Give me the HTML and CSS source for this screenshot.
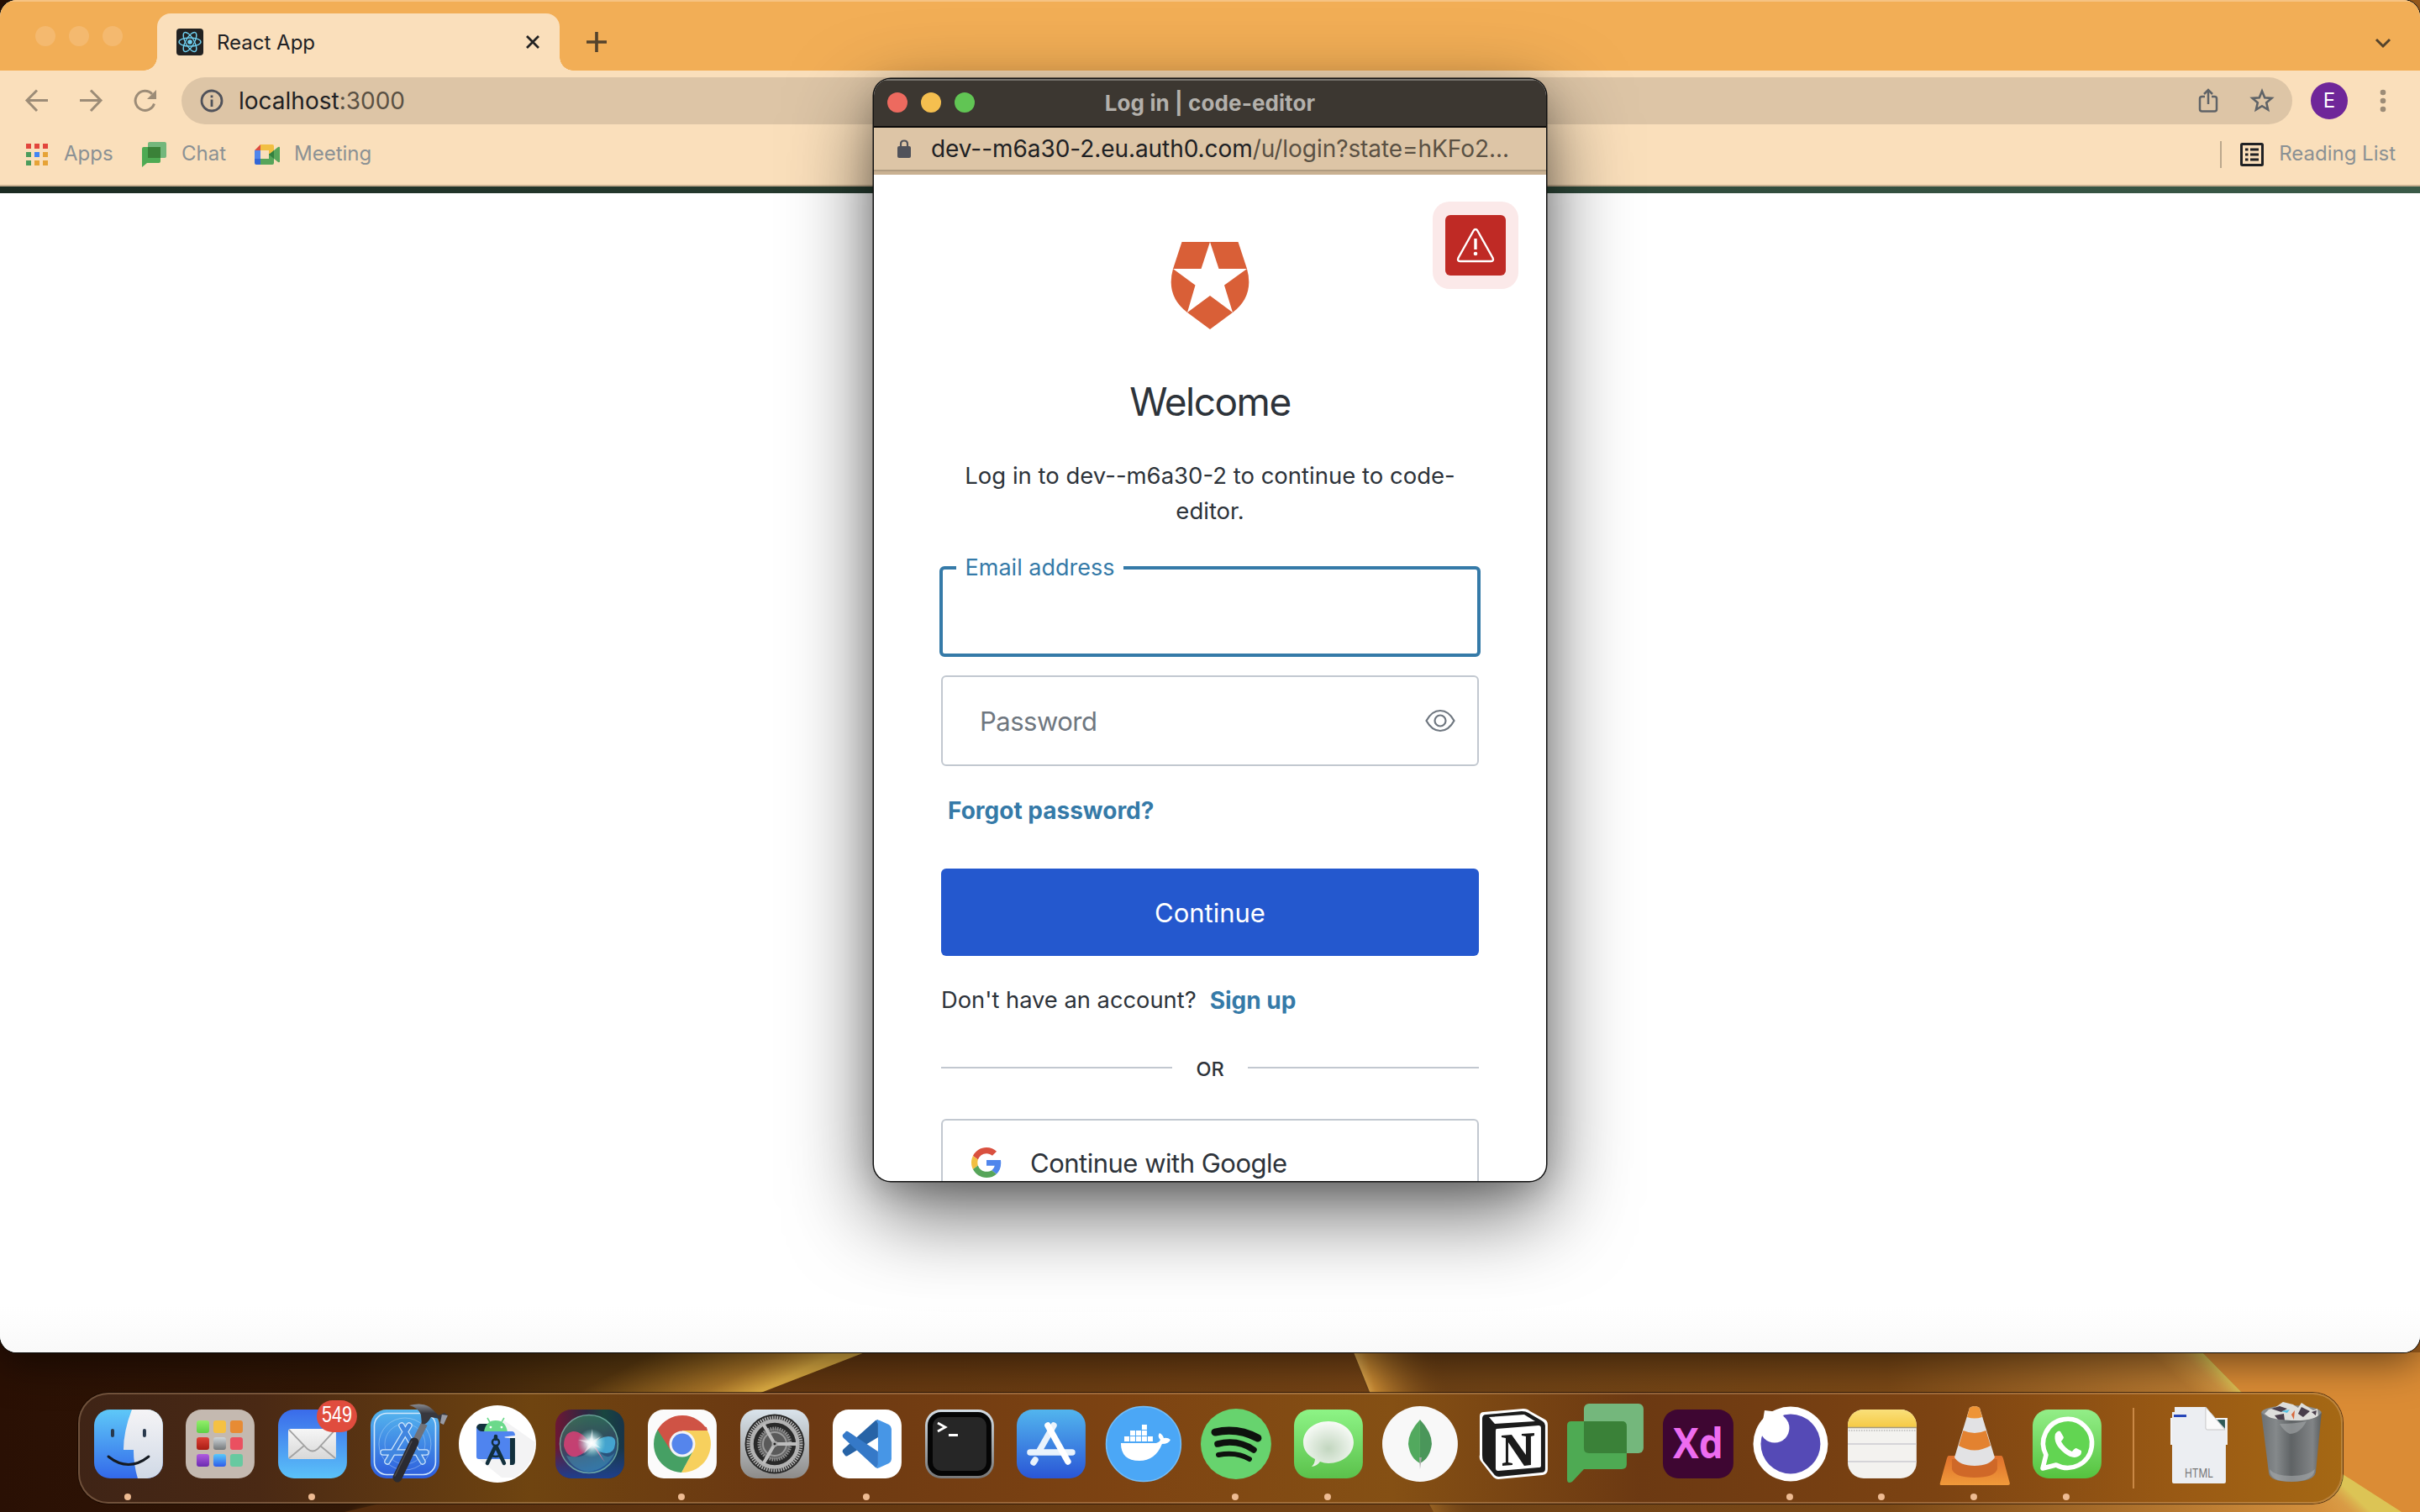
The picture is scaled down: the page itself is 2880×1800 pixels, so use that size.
FILE: index.html
```html
<!DOCTYPE html>
<html lang="en">
<head>
<meta charset="utf-8">
<title>React App</title>
<link rel="stylesheet" href="styles.css">
</head>
<body>
<div class="desktop">
  <svg class="wallpaper" viewBox="0 0 2880 190" preserveAspectRatio="none">
    <defs>
      <linearGradient id="wp-left" x1="0" x2="1"><stop offset="0" stop-color="#2a1004"/><stop offset=".4" stop-color="#321806"/><stop offset="1" stop-color="#7a5418"/></linearGradient>
      <linearGradient id="wp-glow1" gradientUnits="userSpaceOnUse" x1="700" y1="40" x2="745" y2="128"><stop offset="0" stop-color="#d09030" stop-opacity="0"/><stop offset=".7" stop-color="#d39435" stop-opacity=".6"/><stop offset="1" stop-color="#dbab42"/></linearGradient>
      <linearGradient id="wp-mid" x1="0" x2="1"><stop offset="0" stop-color="#4a250b"/><stop offset=".45" stop-color="#6b3d12"/><stop offset="1" stop-color="#95591f"/></linearGradient>
      <linearGradient id="wp-glow2" gradientUnits="userSpaceOnUse" x1="1620" y1="40" x2="1720" y2="14"><stop offset="0" stop-color="#e9b457"/><stop offset=".15" stop-color="#c48631"/><stop offset="1" stop-color="#6b3d12" stop-opacity="0"/></linearGradient>
      <linearGradient id="wp-right" x1="0" x2="1"><stop offset="0" stop-color="#6b4015"/><stop offset=".5" stop-color="#7a4816"/><stop offset="1" stop-color="#e8a045"/></linearGradient>
      <linearGradient id="wp-glow3" gradientUnits="userSpaceOnUse" x1="2700" y1="76" x2="2672" y2="106"><stop offset="0" stop-color="#dcc455"/><stop offset=".4" stop-color="#d9a04a" stop-opacity=".6"/><stop offset="1" stop-color="#d99a40" stop-opacity="0"/></linearGradient>
    </defs>
    <rect width="2880" height="190" fill="url(#wp-mid)"/>
    <path d="M0 0H1029L908 47Q690 125 410 190H0z" fill="url(#wp-left)"/>
    <path d="M500 0H1029L908 47Q690 125 410 190H200z" fill="url(#wp-glow1)"/>
    <path d="M1611 0H2880V190H1706Q1650 120 1611 0z" fill="url(#wp-right)"/>
    <path d="M1611 0H1800V190H1706L1630 47z" fill="url(#wp-glow2)"/>
    <path d="M2621 0H2880V190H2858L2788 145 2667 47z" fill="#db8c35"/>
    <path d="M2500 0H2621L2667 47 2788 145 2858 190H2640z" fill="url(#wp-glow3)"/>
  </svg>

  <main class="browser">
    <div class="tabstrip">
      <div class="lights lights-idle"><i></i><i></i><i></i></div>
      <div class="tab">
        <svg class="favicon" viewBox="0 0 32 32"><rect width="32" height="32" rx="4" fill="#222"/><g fill="none" stroke="#6fd0f0" stroke-width="1.4"><ellipse cx="16" cy="16" rx="13" ry="5"/><ellipse cx="16" cy="16" rx="13" ry="5" transform="rotate(60 16 16)"/><ellipse cx="16" cy="16" rx="13" ry="5" transform="rotate(120 16 16)"/></g><circle cx="16" cy="16" r="2.8" fill="#6fd0f0"/></svg>
        <span class="tab-title">React App</span>
        <svg class="tab-close" viewBox="0 0 18 18"><path d="M2 2L16 16M16 2L2 16" stroke="#222" stroke-width="2.8" fill="none"/></svg>
      </div>
      <svg class="new-tab" viewBox="0 0 24 24"><path d="M12 0V24M0 12H24" stroke="#54432c" stroke-width="3.6"/></svg>
      <svg class="tab-menu" viewBox="0 0 20 14"><path d="M2 3L10 11 18 3" stroke="#54432c" stroke-width="3" fill="none"/></svg>
    </div>
    <div class="toolbar">
      <svg class="nav-icon" viewBox="0 0 32 32"><path d="M29 15.500H4M16 3.500L4 15.500 16 28" stroke="#9c8c77" stroke-width="3" fill="none"/></svg>
      <svg class="nav-icon" viewBox="0 0 32 32"><path d="M3 15.500H28M16 3.500L28 15.500 16 28" stroke="#9c8c77" stroke-width="3" fill="none"/></svg>
      <svg class="nav-icon" viewBox="0 0 32 32"><path d="M27.500 19.500A11.500 11.500 0 1 1 25 8" stroke="#9c8c77" stroke-width="3" fill="none"/><path d="M30 3V14H19z" fill="#9c8c77"/></svg>
      <div class="omnibox">
        <svg class="info" viewBox="0 0 28 28"><circle cx="14" cy="14" r="12" fill="none" stroke="#50525a" stroke-width="2.8"/><path d="M14 12.500V21M14 7.500V10.300" stroke="#50525a" stroke-width="2.8"/></svg>
        <span class="address">localhost<span class="dim">:3000</span></span>
        <svg class="share" viewBox="0 0 24 30"><path d="M8 10H4.500Q2 10 2 12.500V25Q2 27.500 4.500 27.500H19.500Q22 27.500 22 25V12.500Q22 10 19.500 10H16M12 19V3M7 7L12 2 17 7" stroke="#5f6367" stroke-width="2.500" fill="none"/></svg>
        <svg class="star" viewBox="0 0 30 30"><path d="M15 3.500L18.200 11.200 26.500 11.900 20.200 17.300 22.100 25.500 15 21.200 7.900 25.500 9.800 17.300 3.500 11.900 11.800 11.200z" stroke="#5f6367" stroke-width="2.600" fill="none"/></svg>
      </div>
      <div class="avatar">E</div>
      <svg class="kebab" viewBox="0 0 8 28"><g fill="#9c8c77"><circle cx="4" cy="4" r="3.300"/><circle cx="4" cy="14" r="3.300"/><circle cx="4" cy="24" r="3.300"/></g></svg>
    </div>
    <div class="bookmarks">
      <svg class="bm-apps" viewBox="0 0 26 27"><g fill="#e2463d"><path d="M0 0h6v6h-6zM10 0h6v6h-6zM20 0h6v6h-6z"/></g><path d="M0 10h6v6h-6zM0 20h6v6h-6z" fill="#4c9c5c"/><path d="M10 10h6v6h-6z" fill="#4285f4"/><path d="M20 10h6v6h-6zM10 20h6v6h-6zM20 20h6v6h-6z" fill="#e6a337"/></svg>
      <span class="bm-label bm-l1">Apps</span>
      <svg class="bm-chat" viewBox="0 0 30 30"><rect x="7" y="0" width="22" height="19" rx="2" fill="#74b77c"/><path d="M2 6H20Q22 6 22 8V23Q22 25 20 25H6L0 30V8Q0 6 2 6z" fill="#4eaa53"/><path d="M7 6H22V19H7z" fill="#3a8138"/></svg>
      <span class="bm-label bm-l2">Chat</span>
      <svg class="bm-meet" viewBox="0 0 30 24"><path d="M7 0V7H0z" fill="#dd4b3e"/><path d="M7 0H21Q23 0 23 2V12H17V7H7z" fill="#f2bf42"/><path d="M0 7H7V17H0z" fill="#4f86ec"/><path d="M0 17H7V24H2Q0 24 0 22z" fill="#3367d6"/><path d="M7 17H17V11H23V22Q23 24 21 24H7z" fill="#57a55a"/><path d="M17 12L28 3Q30 2 30 4V20Q30 22 28 21z" fill="#57a55a"/><path d="M17 12L23 7V17z" fill="#33803f"/></svg>
      <span class="bm-label bm-l3">Meeting</span>
      <span class="bm-divider"></span>
      <svg class="bm-list" viewBox="0 0 28 28"><rect x="1.500" y="1.500" width="25" height="25" rx="1" fill="none" stroke="#202124" stroke-width="3"/><path d="M6 8H9.500M6 14H9.500M6 20H9.500M12 8H22M12 14H22M12 20H22" stroke="#202124" stroke-width="3"/></svg>
      <span class="bm-label bm-l4">Reading List</span>
    </div>
    <div class="page"></div>
  </main>

  <section class="popup">
    <header class="popup-title">
      <div class="lights"><i class="red"></i><i class="amber"></i><i class="green"></i></div>
      <h1>Log in | code-editor</h1>
    </header>
    <div class="popup-url">
      <svg class="lock" viewBox="0 0 16 22"><rect y="8" width="16" height="14" rx="2" fill="#50525a"/><path d="M4 9V5.500Q4 1.500 8 1.500T12 5.500V9" stroke="#50525a" stroke-width="2.200" fill="none"/></svg>
      <span class="popup-address">dev--m6a30-2.eu.auth0.com<span class="dim">/u/login?state=hKFo2...</span></span>
    </div>
    <div class="login">
      <div class="alert"><svg viewBox="0 0 72 72"><rect width="72" height="72" rx="6" fill="#bf2a25"/><path d="M36 17Q37.500 17 38.300 18.500L56.500 51Q58 55 54.500 55H17.500Q14 55 15.500 51L33.700 18.500Q34.500 17 36 17z" stroke="#fff" stroke-width="2.400" fill="none"/><path d="M36 28V41" stroke="#fff" stroke-width="3.400"/><circle cx="36" cy="46" r="2.300" fill="#fff"/></svg></div>
      <svg class="logo" viewBox="0 0 94 104"><path d="M13.500 0H80.500L91 32Q100 64 74 84L47 104 20 84Q-6 64 3 32z" fill="#d95f37"/><path d="M47 0L57.500 32H91L64 51.500 74 84 47 64 20 84 29.500 51.500 3 32H36.500z" fill="#fff"/></svg>
      <h2>Welcome</h2>
      <p class="lead">Log in to dev--m6a30-2 to continue to code-<br><span class="lead-end">editor.</span></p>
      <div class="field field-focus"><label>Email address</label></div>
      <div class="field field-password"><span>Password</span>
        <svg class="eye" viewBox="0 0 36 28"><path d="M1.500 14Q8 2 18 2T34.500 14Q28 26 18 26T1.500 14z" fill="none" stroke="#6f7780" stroke-width="2.200"/><circle cx="18" cy="14" r="6.500" fill="none" stroke="#6f7780" stroke-width="2.200"/></svg>
      </div>
      <a class="forgot">Forgot password?</a>
      <button class="continue">Continue</button>
      <p class="signup"><span>Don't have an account?</span><a>Sign up</a></p>
      <div class="or"><span>OR</span></div>
      <div class="google">
        <svg class="g-logo" viewBox="0 0 48 48"><path fill="#d9503f" d="M24 9.500c3.540 0 6.710 1.220 9.210 3.600l6.850-6.850C35.900 2.380 30.470 0 24 0 14.620 0 6.510 5.380 2.560 13.220l7.980 6.190C12.430 13.720 17.740 9.500 24 9.500z"/><path fill="#5086ec" d="M46.980 24.550c0-1.570-.15-3.090-.38-4.550H24v9.020h12.940c-.58 2.960-2.260 5.480-4.780 7.180l7.730 6c4.510-4.180 7.090-10.360 7.090-17.650z"/><path fill="#f2bf42" d="M10.530 28.590c-.48-1.450-.76-2.990-.76-4.590s.27-3.140.76-4.590l-7.980-6.190C.92 16.460 0 20.120 0 24c0 3.880.92 7.540 2.560 10.780l7.970-6.190z"/><path fill="#57a55a" d="M24 48c6.480 0 11.930-2.130 15.890-5.810l-7.730-6c-2.150 1.450-4.920 2.300-8.160 2.300-6.260 0-11.570-4.220-13.470-9.910l-7.980 6.190C6.510 42.620 14.620 48 24 48z"/></svg>
        <span>Continue with Google</span>
      </div>
    </div>
  </section>

  <nav class="dock">
    <!-- Finder -->
    <svg class="app" viewBox="-55 -61 110 132"><defs><linearGradient id="fa" x2="0" y2="1"><stop stop-color="#5ec8f8"/><stop offset="1" stop-color="#3369ea"/></linearGradient><linearGradient id="fb" x2="0" y2="1"><stop stop-color="#f5f4f6"/><stop offset="1" stop-color="#d0d9e6"/></linearGradient><clipPath id="sq"><rect x="-41" y="-41" width="82" height="82" rx="19"/></clipPath></defs><g clip-path="url(#sq)"><rect x="-41" y="-41" width="82" height="82" fill="url(#fa)"/><path d="M4-41Q-6-15-6 7H6Q6 25 11 41H41V-41z" fill="url(#fb)"/></g><path d="M-19-16V-10M19-16V-10" stroke="#28384c" stroke-width="4" stroke-linecap="round"/><path d="M-24 15Q0 34 24 15" stroke="#161b22" stroke-width="3" fill="none" stroke-linecap="round"/><circle class="dot" cx="-1" cy="63" r="4"/></svg>
    <!-- Launchpad -->
    <svg class="app" viewBox="-55 -61 110 132"><defs><linearGradient id="lg1" x2="0" y2="1"><stop stop-color="#93ee6a"/><stop offset="1" stop-color="#5bd044"/></linearGradient><linearGradient id="lg2" x2="0" y2="1"><stop stop-color="#b05be0"/><stop offset="1" stop-color="#6c2bb0"/></linearGradient><linearGradient id="lg3" x2="0" y2="1"><stop stop-color="#58c9fa"/><stop offset="1" stop-color="#2e5cea"/></linearGradient><linearGradient id="lg4" x2="0" y2="1"><stop stop-color="#cfd6da"/><stop offset="1" stop-color="#74787a"/></linearGradient><linearGradient id="lg5" x2="0" y2="1"><stop stop-color="#e04237"/><stop offset="1" stop-color="#a81d14"/></linearGradient></defs><rect x="-41" y="-41" width="82" height="82" rx="19" fill="#c4b9b0"/><g><rect x="-28" y="-28" width="15" height="15" rx="3" fill="url(#lg1)"/><rect x="-8" y="-28" width="15" height="15" rx="3" fill="#f5c142"/><rect x="12" y="-28" width="15" height="15" rx="3" fill="#e78b34"/><rect x="-28" y="-8" width="15" height="15" rx="3" fill="url(#lg5)"/><rect x="-8" y="-8" width="15" height="15" rx="3" fill="url(#lg4)"/><rect x="12" y="-8" width="15" height="15" rx="3" fill="#ea5060"/><rect x="-28" y="12" width="15" height="15" rx="3" fill="url(#lg2)"/><rect x="-8" y="12" width="15" height="15" rx="3" fill="url(#lg3)"/><rect x="12" y="12" width="15" height="15" rx="3" fill="#67c9a0"/></g></svg>
    <!-- Mail -->
    <svg class="app" viewBox="-55 -61 110 132"><defs><linearGradient id="ma" x2="0" y2="1"><stop stop-color="#3a6bea"/><stop offset="1" stop-color="#5bc2f9"/></linearGradient><linearGradient id="mb" x2="0" y2="1"><stop stop-color="#f6f6f6"/><stop offset="1" stop-color="#d8d8d8"/></linearGradient></defs><rect x="-41" y="-41" width="82" height="82" rx="19" fill="url(#ma)"/><rect x="-29" y="-18" width="57" height="36" rx="3" fill="url(#mb)"/><path d="M-28 17L-10 2M27 17L9 2M-28-17L-6 6Q0 11 6 6L27-17" fill="none" stroke="#a2a2a2" stroke-width="1.800"/><rect x="5" y="-52" width="48" height="38" rx="19" fill="#e04c3e"/><text class="badge-text" x="29" y="-26" text-anchor="middle" textLength="36" lengthAdjust="spacingAndGlyphs">549</text><circle class="dot" cx="-1" cy="63" r="4"/></svg>
    <!-- Xcode -->
    <svg class="app" viewBox="-55 -61 110 132"><defs><linearGradient id="xa" x2="0" y2="1"><stop stop-color="#55b6ee"/><stop offset="1" stop-color="#2c5bdc"/></linearGradient><linearGradient id="xh" x2="0" y2="1"><stop stop-color="#8b8d94"/><stop offset=".45" stop-color="#38383e"/></linearGradient></defs><rect x="-41" y="-41" width="82" height="82" rx="19" fill="url(#xa)"/><g fill="none" stroke="#cfe6fb"><rect x="-36.500" y="-36.500" width="73" height="73" rx="15" stroke-width="1.600"/><circle r="31" stroke-width=".7" opacity=".6"/><circle r="24" stroke-width=".7" opacity=".5"/></g><g stroke-linecap="round" fill="none"><g stroke="#cfe6fb" stroke-width="7.500"><path d="M-21 21L5-22M-4-22L21 21M-26 10H25"/></g><g stroke="#4186e0" stroke-width="5"><path d="M-21 21L5-22M-4-22L21 21M-26 10H25"/></g></g><path d="M23-24L9 4" stroke="#707279" stroke-width="8"/><path d="M11-2L-9 40" stroke="#2b2b31" stroke-width="11" stroke-linecap="round"/><path d="M8-3L-12 38" stroke="#4a4a50" stroke-width="1.500" stroke-linecap="round"/><path d="M5-46Q24-51 33-41L40-34 47-37 51-34 46-23 42-25 41-30 31-32Q26-22 20-24L19-35Q16-43 5-46z" fill="url(#xh)"/><path d="M44-35L51-34 46-23 42-25z" fill="#9a9ca4"/></svg>
    <!-- Android Studio -->
    <svg class="app" viewBox="-55 -61 110 132"><circle r="46" fill="#fff"/><path d="M8-28L45-2Q44 26 20 40H5L-22 18z" fill="#f3f3f4"/><rect x="-25" y="-24" width="22" height="12" rx="5" fill="#12303d"/><path d="M-16-14Q-14-28-2-28T12-14z" fill="#6bd98b"/><path d="M-9-26L-12-31M5-26L8-31" stroke="#6bd98b" stroke-width="1.600"/><circle cx="-8" cy="-20" r="1.400" fill="#fff"/><circle cx="5" cy="-20" r="1.400" fill="#fff"/><path d="M-25-20Q-23-15-18-15H17Q21-15 21-10-1-8 15-7V18H-22Q-25 18-25 15z" fill="#4f84ef"/><path d="M15-7H21V21Q21 25 18 25H15z" fill="#12303d"/><circle cx="-2" cy="-2" r="4" fill="none" stroke="#12303d" stroke-width="2.500"/><path d="M-2-9V-6M-3 4L-12 23M-1 4L8 23" stroke="#12303d" stroke-width="4.500" stroke-linecap="round"/><path d="M-9 13Q-2 17 5 13" stroke="#12303d" stroke-width="2.500" fill="none"/></svg>
    <!-- Siri -->
    <svg class="app" viewBox="-55 -61 110 132"><defs><linearGradient id="sa"><stop stop-color="#6d1735"/><stop offset=".45" stop-color="#2d2742"/><stop offset=".7" stop-color="#19453f"/><stop offset="1" stop-color="#17344a"/></linearGradient><linearGradient id="sb" x2="0" y2="1"><stop offset=".55" stop-color="#1f3f8d" stop-opacity="0"/><stop offset="1" stop-color="#1f3f8d"/></linearGradient><radialGradient id="sc"><stop stop-color="#fff"/><stop offset=".3" stop-color="#e9fafc" stop-opacity=".9"/><stop offset="1" stop-color="#7ddbd8" stop-opacity="0"/></radialGradient><linearGradient id="sd" x1=".3" x2=".6" y2="1"><stop stop-color="#35845f"/><stop offset=".5" stop-color="#3b4f68"/><stop offset="1" stop-color="#2460a8"/></linearGradient></defs><rect x="-41" y="-41" width="82" height="82" rx="19" fill="url(#sa)"/><rect x="-41" y="-41" width="82" height="82" rx="19" fill="url(#sb)"/><circle cx="-1" r="34.500" fill="url(#sd)" opacity=".75" stroke="#7fc5b4" stroke-width="1.500"/><path d="M2 2Q-8-15-20-15-31-13-31 2-27 17-16 15-6 12 2 2z" fill="#dc3f75" opacity=".85"/><path d="M2 2Q12-9 22-9T30 1Q29 11 20 11T2 2z" fill="#4ab9e8" opacity=".8"/><path d="M-28 14Q-4 20 6 0 18 24 30 10 20 31-2 33-20 31-28 14z" fill="#5ec5cf" opacity=".3"/><path d="M2 0L18 22 8 5z" fill="#e37aa6"/><circle cx="2" cy="-1" r="17" fill="url(#sc)"/><path d="M3-18L4-4 13-9 6-1 13 5 3 2-7 11-1 0-14-5 0-4z" fill="#fff" opacity=".5"/></svg>
    <!-- Chrome -->
    <svg class="app" viewBox="-55 -61 110 132"><rect x="-41" y="-41" width="82" height="82" rx="19" fill="#fbfbfb"/><path d="M0 0L-29.400-17A34 34 0 0 1 30-16H0z" fill="#cf5345"/><path d="M0-16H30A34 34 0 0 1-1 34L13 8z" fill="#f7d05d"/><path d="M-29.400-17A34 34 0 0 0-1 34L12 10-13 8-26-17z" fill="#46a064"/><path d="M-29.400-17L-13 9 0 0V-16H30L29-20-10-30z" fill="#cf5345"/><circle r="15.500" fill="#f3f3f6"/><circle r="12.500" fill="#5585ec"/><circle class="dot" cx="-1" cy="63" r="4"/></svg>
    <!-- System Preferences -->
    <svg class="app" viewBox="-55 -61 110 132"><defs><linearGradient id="pa" x2="0" y2="1"><stop stop-color="#dae4ec"/><stop offset="1" stop-color="#8d8b89"/></linearGradient></defs><rect x="-41" y="-41" width="82" height="82" rx="19" fill="url(#pa)"/><circle r="35.500" fill="#292929"/><circle r="31.500" fill="none" stroke="#b5b5b5" stroke-width="4" stroke-dasharray="1.600 1.300"/><circle r="27.500" fill="none" stroke="#b2b2b2" stroke-width="4.500"/><circle r="18.500" fill="#666" stroke="#8f8f8f" stroke-width="4" stroke-dasharray="1.600 1.200"/><circle r="14" fill="#5a5a5a" stroke="#9b9b9b" stroke-width="2"/><path d="M0 0H27M0 0L-13.500-23.500M0 0L-13.500 23.500" stroke="#bdbdbd" stroke-width="4"/><circle r="3.500" fill="#aaa"/><circle r="1.500" fill="#222"/></svg>
    <!-- VS Code -->
    <svg class="app" viewBox="-55 -61 110 132"><rect x="-41" y="-41" width="82" height="82" rx="19" fill="#fff"/><path d="M13-29V-8L-23 14Q-25 15-26 14L-29 10Q-30 8-28 6L10-28z" fill="#2763a6"/><path d="M13 29V9L-23-15Q-25-16-26-14L-29-11Q-30-9-28-7L10 28z" fill="#3579c8"/><path d="M11-28Q13-29 15-28L26-23Q29-21 29-18V18Q29 21 26 23L15 28Q13 29 11 28L13 24V-24z" fill="#4796e6"/><circle class="dot" cx="-1" cy="63" r="4"/></svg>
    <!-- Terminal -->
    <svg class="app" viewBox="-55 -61 110 132"><defs><linearGradient id="ta" x2="0" y2="1"><stop stop-color="#d4dee6"/><stop offset="1" stop-color="#777"/></linearGradient></defs><rect x="-41" y="-41" width="82" height="82" rx="19" fill="url(#ta)"/><rect x="-38" y="-38" width="76" height="76" rx="16" fill="#050505"/><rect x="-32" y="-32" width="64" height="64" rx="10" fill="#262626"/><path d="M-26-25L-17-20-26-15M-13-10.500H-2" stroke="#fff" stroke-width="2.800" fill="none"/></svg>
    <!-- App Store -->
    <svg class="app" viewBox="-55 -61 110 132"><defs><linearGradient id="as" x2="0" y2="1"><stop stop-color="#52b5ee"/><stop offset="1" stop-color="#2a56d6"/></linearGradient></defs><rect x="-41" y="-41" width="82" height="82" rx="19" fill="url(#as)"/><g stroke="#e9f3fc" stroke-width="7.500" stroke-linecap="round"><path d="M-25 10H25M-19 19L-21 22M3-22L-14 8"/><path d="M-4-22L20 21" stroke="#fff"/></g></svg>
    <!-- Docker -->
    <svg class="app" viewBox="-55 -61 110 132"><circle r="44.500" fill="#4ba7f6" stroke="#73bdf8" stroke-width="1.500"/><path d="M-27-1H15Q19-2 20-5 16-9 19-13 23-11 24-7 29-8 32-5 30 0 22 0 14 20-5 20-27 20-27-1z" fill="#fff"/><path d="M-23-9h6v6h-6zM-16-9h6v6h-6zM-9-9h6v6h-6zM-2-9h6v6h-6zM5-9h6v6h-6zM-16-16h6v6h-6zM-9-16h6v6h-6zM-2-16h6v6h-6zM-2-23h6v6h-6z" fill="#fff"/></svg>
    <!-- Spotify -->
    <svg class="app" viewBox="-55 -61 110 132"><circle r="42" fill="#67d36e"/><g stroke="#0e120e" fill="none" stroke-linecap="round"><path d="M-25-14Q2-20 26-7" stroke-width="9"/><path d="M-22 0Q2-6 21 7" stroke-width="7.500"/><path d="M-21 13Q1 9 16 18" stroke-width="6"/></g><circle class="dot" cx="-1" cy="63" r="4"/></svg>
    <!-- Messages -->
    <svg class="app" viewBox="-55 -61 110 132"><defs><linearGradient id="mg" x2="0" y2="1"><stop stop-color="#8df486"/><stop offset="1" stop-color="#5bc14b"/></linearGradient><radialGradient id="mh" cx=".5" cy=".6" r=".6"><stop stop-color="#c2d6bf"/><stop offset="1" stop-color="#f8fbf7"/></radialGradient></defs><rect x="-41" y="-41" width="82" height="82" rx="19" fill="url(#mg)"/><path d="M0-27C17-27 30-16 30-2S17 23 0 23Q-5 23-10 21-13 26-20 27-16 23-16 18-30 11-30-2C-30-16-17-27 0-27z" fill="url(#mh)"/><circle class="dot" cx="-1" cy="63" r="4"/></svg>
    <!-- MongoDB Compass -->
    <svg class="app" viewBox="-55 -61 110 132"><circle cx="-1" r="45" fill="#f8f8f8"/><path d="M-1-29Q-15-14-15 0-13 17-1 23z" fill="#52a95e"/><path d="M-1-29Q13-14 13 0 11 17-1 23z" fill="#4a965a"/><path d="M-2 16L-1 30 1 16z" fill="#aaa"/></svg>
    <!-- Notion -->
    <svg class="app" viewBox="-55 -61 110 132"><path d="M-40-33Q-40-38-35-38L12-42Q17-42 20-39L38-29Q41-27 41-23V30Q41 36 35 37L-18 42Q-22 42-25 38L-39 20Q-41 17-40 13z" fill="#fff"/><path d="M-37-30Q-37-35-32-35L10-39Q15-39 18-37L35-27Q38-25 38-22V30Q38 34 33 34L-17 39Q-21 39-23 36L-36 20Q-37 17-37 13z" fill="#1b1b1b"/><path d="M-29-32L13-35 26-27-22-24Z" fill="#fff"/><path d="M-20-18L30-22Q33-22 33-19V26Q33 28 30 28L-18 32Q-21 32-21 29V-15Q-21-18-20-18z" fill="#fff"/><path d="M-14-10L-2-11 15 13V-9L10-10V-12L25-13V-10L21-9V25L13 26-6-2V22L-1 23V25L-13 26V23L-9 22V-7L-14-8z" fill="#1b1b1b"/></svg>
    <!-- Google Chat -->
    <svg class="app" viewBox="-55 -61 110 132"><rect x="-26" y="-48" width="71" height="59" rx="6" fill="#74b77c"/><path d="M-41-27H19Q25-27 25-21V24Q25 30 19 30H-26L-40 45Q-46 48-46 42V-22Q-46-27-41-27z" fill="#4eaa53"/><path d="M-26-27H19Q25-27 25-21V11H-20Q-26 11-26 5z" fill="#3a8138"/></svg>
    <!-- Adobe XD -->
    <svg class="app" viewBox="-55 -61 110 132"><rect x="-42" y="-41" width="84" height="82" rx="18" fill="#3e0632"/><text class="xd-text" x="0" y="17" text-anchor="middle" textLength="60" lengthAdjust="spacingAndGlyphs">Xd</text></svg>
    <!-- Insomnia -->
    <svg class="app" viewBox="-55 -61 110 132"><circle r="44.500" fill="#fff"/><circle r="35.500" fill="#554ab6"/><circle cx="-19" cy="-19" r="17.500" fill="#fff"/><path d="M-36-9L-31-40-6-37z" fill="#fff"/><circle class="dot" cx="-1" cy="63" r="4"/></svg>
    <!-- Notes -->
    <svg class="app" viewBox="-55 -61 110 132"><defs><linearGradient id="na" x2="0" y2="1"><stop stop-color="#fae07a"/><stop offset="1" stop-color="#f5c944"/></linearGradient></defs><g clip-path="url(#sq)"><rect x="-41" y="-41" width="82" height="82" fill="#f3f2ef"/><rect x="-41" y="-41" width="82" height="22" fill="url(#na)"/><path d="M-41-19.500H41" stroke="#a39a80" stroke-width="1.600"/><path d="M-40-16H41" stroke="#b9b9b9" stroke-width="1.600" stroke-dasharray="1.500 1.500"/><path d="M-41 0H41M-41 21H41" stroke="#d5d4d8" stroke-width="1.800"/></g><circle class="dot" cx="-1" cy="63" r="4"/></svg>
    <!-- VLC -->
    <svg class="app" viewBox="-55 -61 110 132"><defs><linearGradient id="va" x2="0" y2="1"><stop stop-color="#e0702c"/><stop offset="1" stop-color="#f09a3a"/></linearGradient></defs><path d="M-31 14H32Q33 14 34 17L42 47Q42 49 40 49H-40Q-42 49-41 46L-33 17Q-32 14-31 14z" fill="url(#va)"/><path d="M-27 18V30Q-24 40 0 40T27 30V18z" fill="#cf6828"/><path d="M-6-43Q0-47 6-43L24 16Q18 26 0 26T-24 16z" fill="#e2e2e4"/><path d="M-6-43Q0-47 6-43L9-32Q0-29-9-32z" fill="#ee9436"/><path d="M-13.500-16Q0-10 13.500-16L19 2Q0 13-19 2z" fill="#e38230"/><circle class="dot" cx="-1" cy="63" r="4"/></svg>
    <!-- WhatsApp -->
    <svg class="app" viewBox="-55 -61 110 132"><defs><linearGradient id="wa" x2="0" y2="1"><stop stop-color="#93ee88"/><stop offset="1" stop-color="#55c33f"/></linearGradient></defs><rect x="-41" y="-41" width="82" height="82" rx="19" fill="url(#wa)"/><path d="M-29 29L-25 13A29 29 0 1 1-13 25z" fill="#62d552" stroke="#fff" stroke-width="5.500" stroke-linejoin="round"/><path d="M-14-12Q-11-17-8-15L-4-8Q-4-6-7-3-2 6 6 9 9 5 11 5L17 8Q18 13 13 15 6 18-3 11-17 0-14-12z" fill="#fff"/><circle class="dot" cx="-1" cy="63" r="4"/></svg>
    <span class="dock-divider"></span>
    <!-- Downloads stack -->
    <svg class="app app-file" viewBox="-55 -61 110 132"><path d="M-34-31H34V1H-34z" fill="#f4f4f6"/><path d="M20-29H31V-18H20z" fill="#2f5a58"/><path d="M-29-44H8L32-17V45Q32 47 30 47H-30Q-32 47-32 45V-38H-29z" fill="#eceef2"/><path d="M-30-35H-15V-32H-30z" fill="#2444b8"/><path d="M8-44L31-17H10Q8-17 8-19z" fill="#fafafa" stroke="#bbb" stroke-width=".8"/><text class="html-text" x="0" y="40" text-anchor="middle" textLength="34" lengthAdjust="spacingAndGlyphs">HTML</text></svg>
    <!-- Trash -->
    <svg class="app" viewBox="-55 -61 110 132"><defs><linearGradient id="tr"><stop stop-color="#6c7073"/><stop offset=".25" stop-color="#85898b"/><stop offset=".5" stop-color="#5f6365"/><stop offset=".85" stop-color="#818486"/><stop offset="1" stop-color="#5b5f61"/></linearGradient></defs><ellipse cx="0" cy="-37" rx="36" ry="9" fill="#8a8d8e"/><path d="M-32-36L-27-41-20-43-10-50 2-47 8-43 12-49 26-40 31-42 32-33 20-27H-20z" fill="#dededb"/><path d="M-24-42L-14-45-5-42-12-38zM12-44L22-39 14-32 8-36zM-20-34L-9-36-8-28-16-29zM24-38L30-40 29-34z" fill="#4a3f4c"/><path d="M-12-39L-2-41-5-37z" fill="#55c3e5"/><path d="M0-35L4-40 3-29z" fill="#d8683c"/><path d="M-36-38Q-30-29 0-28T36-38L29 34Q26 45 0 45T-27 34z" fill="url(#tr)"/><path d="M-14-24Q5-24 18-27 10-12-2-12-9-15-14-24z" fill="#a5a8aa" opacity=".6"/><path d="M-26 30Q-20 38 0 38T28 30Q26 45 0 45T-26 30z" fill="#a5a8aa" opacity=".6"/></svg>
  </nav>
</div>
</body>
</html>
```
FILE: styles.css
```css
* { box-sizing: border-box; }
body { margin: 0; font-family: Inter, "Noto Sans", sans-serif; }
h1, h2, p { margin: 0; font-weight: 400; }
svg { display: block; flex: none; }
span { white-space: nowrap; }

.desktop {
  position: relative;
  width: 2880px;
  height: 1800px;
  overflow: hidden;
  display: flex;
  flex-direction: column;
  align-items: center;
  background: linear-gradient(90deg, #2a1004, #a5621f);
}
.wallpaper { position: absolute; left: 0; bottom: 0; width: 2880px; height: 190px; }

/* Browser window */
.browser {
  position: relative;
  width: 2880px;
  height: 1610px;
  flex: none;
  display: flex;
  flex-direction: column;
  border-radius: 20px;
  overflow: hidden;
  background: #fff;
  box-shadow: 0 0 0 1px #0b0b08, 0 10px 50px rgba(0, 0, 0, .55);
}
.tabstrip {
  height: 84px;
  display: flex;
  background: #f2ae56;
  border-top: 2px solid #f6c383;
  padding-left: 42px;
}
.lights { display: flex; gap: 16px; align-items: center; }
.lights i { width: 24px; height: 24px; border-radius: 50%; }
.lights-idle { height: 82px; width: 145px; }
.lights-idle i { background: #f4b96f; }
.tab {
  position: relative;
  width: 479px;
  margin-top: 14px;
  height: 68px;
  border-radius: 16px 16px 0 0;
  background: #fadfbb;
  display: flex;
  align-items: center;
  padding: 0 23px;
}
.tab::before, .tab::after {
  content: "";
  position: absolute;
  bottom: 0;
  width: 16px;
  height: 16px;
}
.tab::before { left: -16px; background: radial-gradient(circle at 0 0, transparent 15.500px, #fadfbb 16px); }
.tab::after { right: -16px; background: radial-gradient(circle at 100% 0, transparent 15.500px, #fadfbb 16px); }
.favicon { width: 32px; height: 32px; }
.tab-title { flex: 1; margin-left: 16px; font-size: 24px; color: #202124; }
.tab-close { width: 18px; height: 18px; }
.new-tab { width: 24px; height: 24px; margin: 36px 0 0 32px; }
.tab-menu { width: 20px; height: 14px; margin: 42px 34px 0 auto; }

.toolbar {
  height: 72px;
  display: flex;
  align-items: center;
  background: #fadfbb;
  padding-left: 28px;
}
.nav-icon { width: 32px; height: 32px; margin-right: 32px; }
.nav-icon:nth-child(3) { margin-right: 28px; }
.omnibox {
  width: 2512px;
  height: 56px;
  border-radius: 28px;
  background: #ddc5a6;
  display: flex;
  align-items: center;
  padding: 0 21px 0 22px;
}
.info { width: 28px; height: 28px; }
.address { flex: 1; margin-left: 18px; font-size: 28px; color: #202124; }
.dim { color: #5a5144; }
.share { width: 24px; height: 30px; margin-right: 37px; }
.star { width: 30px; height: 30px; }
.avatar {
  width: 44px;
  height: 44px;
  margin-left: 22px;
  border-radius: 50%;
  background: #6f2699;
  color: #fff;
  font-size: 24px;
  line-height: 44px;
  text-align: center;
}
.kebab { width: 8px; height: 28px; margin-left: 38px; }

.bookmarks {
  height: 66px;
  display: flex;
  align-items: center;
  background: #fadfbb;
  border-bottom: 2px solid #c9b192;
  padding: 0 29px 8px 31px;
}
.bm-label { font-size: 24px; line-height: 30px; padding-bottom: 2px; color: #8b9194; }
.bm-apps { width: 26px; height: 27px; margin-right: 19px; }
.bm-l1 { width: 93px; }
.bm-chat { width: 30px; height: 30px; margin-right: 17px; }
.bm-l2 { width: 87px; }
.bm-meet { width: 30px; height: 24px; margin-right: 17px; }
.bm-divider { width: 2px; height: 32px; margin-left: auto; background: #bba88c; }
.bm-list { width: 28px; height: 28px; margin: 0 18px 0 22px; }
.page {
  flex: 1;
  border-top: 8px solid;
  border-image: linear-gradient(90deg, #1b2b22, #3a5a48) 1;
  background: linear-gradient(#fff 96%, #f9f9f9);
}

/* Login popup window */
.popup {
  position: absolute;
  left: 1040px;
  top: 94px;
  width: 800px;
  height: 1312px;
  border-radius: 20px;
  overflow: hidden;
  background: #fff;
  box-shadow: 0 0 0 1.500px #111, 0 36px 100px rgba(0, 0, 0, .62), 0 10px 36px rgba(0, 0, 0, .18);
  display: flex;
  flex-direction: column;
}
.popup-title {
  height: 58px;
  flex: none;
  display: flex;
  align-items: center;
  background: #3c3731;
  border-top: 2px solid #77746f;
  border-bottom: 2px solid #0a0908;
  padding: 0 0 2px 16px;
}
.popup-title h1 {
  flex: 1;
  margin-right: 120px;
  text-align: center;
  font-size: 26px;
  font-weight: 700;
  letter-spacing: .1px;
  color: #b3b0ab;
}
.popup-title .lights { width: 104px; }
.red { background: #ed6a5f; }
.amber { background: #f5bf4f; }
.green { background: #61c554; }
.popup-url {
  height: 56px;
  flex: none;
  display: flex;
  align-items: center;
  background: #ddc5a6;
  border-bottom: 4px solid #c9b192;
  box-shadow: inset 0 -2px #b09c81;
  padding: 0 28px 2px;
}
.lock { width: 16px; height: 22px; }
.popup-address { margin-left: 24px; font-size: 28px; letter-spacing: -.06px; color: #202124; }

.login {
  position: relative;
  flex: 1;
  min-height: 0;
  display: flex;
  flex-direction: column;
  padding: 80px 80px 0;
  color: #2d333a;
}
.login > * { flex-shrink: 0; }
.alert {
  position: absolute;
  right: 33px;
  top: 32px;
  width: 102px;
  height: 104px;
  padding: 16px 15px;
  border-radius: 20px;
  background: #fbe9e9;
}
.logo { width: 94px; height: 104px; margin: 0 auto; }
h2 { margin-top: 58px; height: 56px; line-height: 56px; text-align: center; font-size: 46px; letter-spacing: -1.500px; }
.lead { margin-top: 39px; font-size: 27.500px; line-height: 42px; text-align: center; white-space: nowrap; }
.field { position: relative; border-radius: 6px; }
.field-focus {
  height: 108px;
  margin: 45px -2px 0;
  border: 4px solid #357aa8;
}
.field-focus label {
  position: absolute;
  left: 16px;
  top: -22px;
  width: 199px;
  height: 40px;
  line-height: 40px;
  background: #fff;
  color: #357aa8;
  font-size: 27px;
  text-align: center;
}
.field-password {
  height: 108px;
  margin-top: 22px;
  border: 2px solid #c2c8d0;
  display: flex;
  align-items: center;
  justify-content: space-between;
  padding: 0 26px 0 44px;
  font-size: 31px;
  letter-spacing: -.5px;
  color: #6f7780;
}
.eye { width: 36px; height: 28px; }
.forgot { margin: 33px 0 0 8px; height: 40px; line-height: 40px; font-size: 28px; font-weight: 700; color: #357aa8; }
.continue {
  height: 104px;
  margin-top: 49px;
  border: 0;
  border-radius: 6px;
  background: #2458ce;
  color: #fff;
  font: 400 31px/104px Inter, "Noto Sans", sans-serif;
}
.signup { margin-top: 33px; height: 40px; line-height: 40px; display: flex; font-size: 27.300px; }
.signup a { margin-left: 16px; font-size: 28px; font-weight: 700; color: #357aa8; }
.or { margin-top: 40px; height: 40px; display: flex; align-items: center; font-size: 23.500px; font-weight: 500; line-height: 40px; }
.or span { width: 90px; padding-top: 3px; text-align: center; }
.or::before, .or::after { content: ""; flex: 1; height: 2px; background: #c2c8d0; }
.google {
  height: 108px;
  margin-top: 41px;
  border: 2px solid #c2c8d0;
  border-radius: 6px;
  display: flex;
  align-items: center;
  padding: 0 0 4px 34px;
  font-size: 31px;
  letter-spacing: -.5px;
}
.g-logo { width: 36px; height: 36px; margin-right: 34px; }

/* Dock */
.dock {
  position: relative;
  width: 2695px;
  height: 132px;
  flex: none;
  margin-top: 48px;
  display: flex;
  border-radius: 36px;
  padding-left: 5px;
  background: linear-gradient(90deg, #3f2416 0, #4a2914 8%, #6f4410 20%, #6b3812 31%, #7d4312 46%, #855014 58%, #6c3912 69%, #7c4312 82%, #9a5a14 93%, #a56814);
  box-shadow: inset 0 0 0 2px rgba(255, 215, 170, .25), 0 0 0 1px rgba(20, 8, 0, .65);
}
.app { width: 109.900px; height: 132px; overflow: visible; }
.dot { fill: #eebb92; }
.dock-divider { width: 2px; height: 96px; margin: 18px 22px 0 22.800px; background: #c98845; }
.badge-text { font: 27px "Liberation Sans", sans-serif; fill: #fff; }
.xd-text { font: 700 50px "Open Sans", sans-serif; fill: #ee6cf0; }
.html-text { font: 14px Inter, sans-serif; fill: #777; }
```
